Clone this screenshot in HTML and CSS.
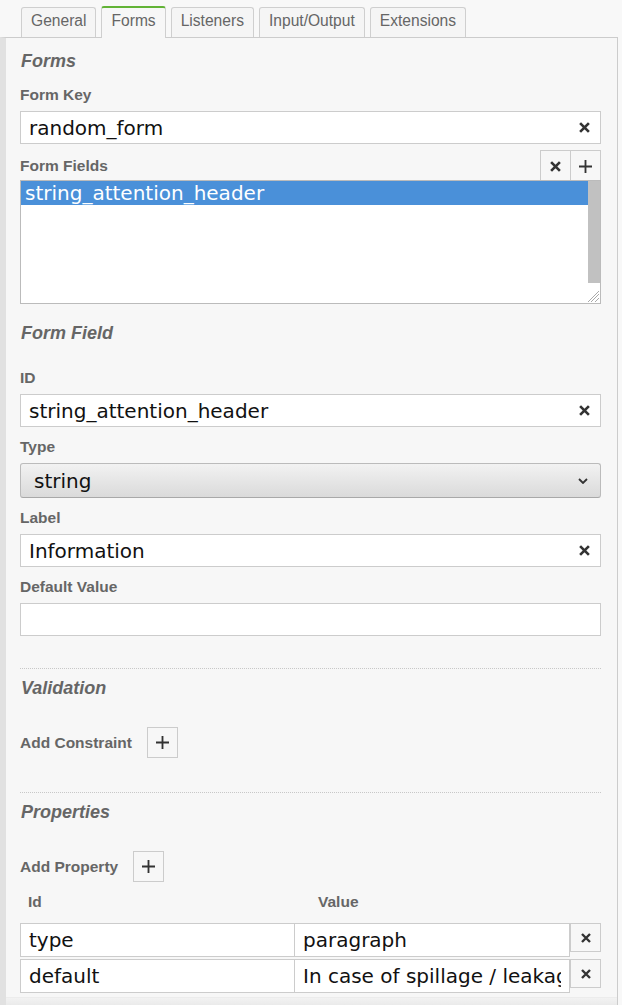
FILE: index.html
```html
<!DOCTYPE html>
<html>
<head>
<meta charset="utf-8">
<link rel="stylesheet" href="styles.css">
</head>
<body>
<div class="tabs">
  <div class="tab">General</div>
  <div class="tab active">Forms</div>
  <div class="tab">Listeners</div>
  <div class="tab">Input/Output</div>
  <div class="tab">Extensions</div>
</div>
<div class="panel">
  <div class="panel-body">
    <div class="title t-forms">Forms</div>
    <div class="field f-key">
      <div class="label">Form Key</div>
      <div class="input"><span class="val">random_form</span><svg class="clear" width="11" height="11" viewBox="0 0 10 10"><path d="M1 1L9 9M9 1L1 9"/></svg></div>
    </div>
    <div class="list-head">
      <div class="label">Form Fields</div>
      <div class="btn-group">
        <div class="btn"><svg class="ico-x" width="11" height="11" viewBox="0 0 10 10"><path d="M1 1L9 9M9 1L1 9"/></svg></div>
        <div class="btn"><svg class="ico-plus" width="13" height="13" viewBox="0 0 12 12"><path d="M6 0V12M0 6H12"/></svg></div>
      </div>
    </div>
    <div class="list">
      <div class="list-items">
        <div class="list-item selected">string_attention_header</div>
      </div>
      <div class="scroll"><div class="thumb"></div></div>
      <svg class="grip" width="12" height="12" viewBox="0 0 12 12"><path d="M11 3L3 11M11 7L7 11M11 0L0 11"/></svg>
    </div>

    <div class="title t-field">Form Field</div>
    <div class="field f-id">
      <div class="label">ID</div>
      <div class="input"><span class="val">string_attention_header</span><svg class="clear" width="11" height="11" viewBox="0 0 10 10"><path d="M1 1L9 9M9 1L1 9"/></svg></div>
    </div>
    <div class="field f-type">
      <div class="label">Type</div>
      <div class="select"><span class="val">string</span><svg class="chev" width="10" height="6" viewBox="0 0 10 6"><path d="M1 1L5 5L9 1"/></svg></div>
    </div>
    <div class="field f-label">
      <div class="label">Label</div>
      <div class="input"><span class="val">Information</span><svg class="clear" width="11" height="11" viewBox="0 0 10 10"><path d="M1 1L9 9M9 1L1 9"/></svg></div>
    </div>
    <div class="field f-default">
      <div class="label">Default Value</div>
      <div class="input"><span class="val"></span></div>
    </div>

    <div class="sep s-1"></div>
    <div class="title t-sub">Validation</div>
    <div class="add-row">
      <div class="label">Add Constraint</div>
      <div class="btn single"><svg class="ico-plus" width="13" height="13" viewBox="0 0 12 12"><path d="M6 0V12M0 6H12"/></svg></div>
    </div>

    <div class="sep s-2"></div>
    <div class="title t-sub">Properties</div>
    <div class="add-row">
      <div class="label">Add Property</div>
      <div class="btn single"><svg class="ico-plus" width="13" height="13" viewBox="0 0 12 12"><path d="M6 0V12M0 6H12"/></svg></div>
    </div>

    <div class="props">
      <div class="th th-id">Id</div>
      <div class="th th-val">Value</div>
      <div></div>
      <div class="cell"><span class="val">type</span></div>
      <div class="cell cell-val"><span class="val">paragraph</span></div>
      <div class="btn row-btn"><svg class="ico-x" width="10" height="10" viewBox="0 0 10 10"><path d="M1 1L9 9M9 1L1 9"/></svg></div>
      <div class="cell r2"><span class="val">default</span></div>
      <div class="cell cell-val r2"><span class="val">In case of spillage / leakag</span></div>
      <div class="btn row-btn r2"><svg class="ico-x" width="10" height="10" viewBox="0 0 10 10"><path d="M1 1L9 9M9 1L1 9"/></svg></div>
    </div>
  </div>
  <div class="panel-foot"></div>
</div>
</body>
</html>
```

FILE: styles.css
```css
* { box-sizing: border-box; }

html, body {
  margin: 0;
  padding: 0;
  background: #f8f8f8;
}

body {
  width: 622px;
  height: 1005px;
  overflow: hidden;
  font-family: "Liberation Sans", Arial, sans-serif;
}

/* ---------- tabs ---------- */
.tabs {
  display: flex;
  align-items: flex-end;
  gap: 5px;
  padding: 6px 0 0 21px;
  height: 37px;
}

.tab {
  height: 30px;
  padding: 4px 9px 0;
  border: 1px solid #cfcfcf;
  border-bottom: none;
  border-radius: 3px 3px 0 0;
  background: #f5f5f5;
  color: #666;
  font-size: 15.6px;
  line-height: 18px;
}

.tab.active {
  position: relative;
  z-index: 2;
  height: 32px;
  margin-bottom: -1px;
  padding-top: 4px;
  border-top: 2px solid #62b336;
  background: #f7f7f7;
}

/* ---------- panel ---------- */
.panel {
  width: 618px;
  border-top: 1px solid #cccccc;
  border-left: 6px solid #e1e1e1;
  border-right: 1px solid #cccccc;
  background: #f7f7f7;
}

.panel-body {
  display: flex;
  flex-direction: column;
  padding: 12px 16px 4px 14px;
}

.panel-foot {
  height: 12px;
  background: linear-gradient(#f2f2f2, #e6e6e6);
  border-top: 1px solid #ececec;
}

.title {
  font-size: 18px;
  line-height: 22px;
  font-weight: bold;
  font-style: italic;
  color: #666;
  padding-left: 1px;
}

.t-forms { margin-bottom: 14px; }
.t-field { margin-top: 18px; }
.t-sub { margin-top: 8px; }

.label {
  font-size: 15.5px;
  line-height: 18px;
  font-weight: bold;
  color: #666;
}

.field {
  display: flex;
  flex-direction: column;
  gap: 7px;
}

.f-id { margin-top: 25px; }
.f-type { margin-top: 11px; }
.f-label { margin-top: 11px; }
.f-default { margin-top: 11px; }

.input {
  display: flex;
  align-items: center;
  height: 33px;
  padding: 0 10px 0 8px;
  border: 1px solid #cccccc;
  background: #fff;
  font-family: "DejaVu Sans", Verdana, sans-serif;
  font-size: 20px;
  color: #111;
}

.val {
  flex: 1;
  min-width: 0;
  white-space: nowrap;
  overflow: hidden;
}

.clear path,
.ico-x path {
  stroke: #333;
  stroke-width: 2.4;
  fill: none;
}

.ico-plus path {
  stroke: #333;
  stroke-width: 1.7;
  fill: none;
}

/* ---------- form fields list ---------- */
.list-head {
  display: flex;
  align-items: center;
  justify-content: space-between;
  margin-top: 6px;
  height: 31px;
}

.btn-group {
  display: flex;
  align-self: stretch;
}

.btn {
  display: flex;
  align-items: center;
  justify-content: center;
  width: 31px;
  border: 1px solid #cccccc;
  background: #f7f7f7;
}

.btn-group .btn {
  height: 32px;
}

.btn-group .btn + .btn {
  margin-left: -1px;
}

.list {
  position: relative;
  display: flex;
  height: 124px;
  margin-top: -1px;
  border: 1px solid #bbbbbb;
  background: #fff;
}

.list-items {
  flex: 1;
}

.list-item {
  height: 24px;
  padding-left: 4px;
  font-family: "DejaVu Sans", Verdana, sans-serif;
  font-size: 20px;
  line-height: 24px;
  color: #111;
}

.list-item.selected {
  background: #4a90d9;
  color: #fff;
}

.scroll {
  width: 12px;
}

.thumb {
  height: 102px;
  background: #c1c1c1;
}

.grip {
  position: absolute;
  right: 0;
  bottom: 0;
}

.grip path {
  stroke: #aaaaaa;
  stroke-width: 1;
  fill: none;
}

/* ---------- select ---------- */
.select {
  display: flex;
  align-items: center;
  height: 35px;
  padding: 0 12px 0 13px;
  border: 1px solid #bbbbbb;
  border-bottom-color: #a8a8a8;
  border-radius: 3px;
  background: linear-gradient(#f2f2f2, #dadada);
  font-family: "DejaVu Sans", Verdana, sans-serif;
  font-size: 20px;
  color: #111;
}

.chev path {
  stroke: #333;
  stroke-width: 1.8;
  fill: none;
}

/* ---------- separators / add rows ---------- */
.sep {
  height: 1px;
  border-top: 1px dotted #c8c8c8;
}

.s-1 { margin-top: 32px; }
.s-2 { margin-top: 34px; }

.add-row {
  display: flex;
  align-items: center;
  gap: 15px;
  margin-top: 28px;
}

.btn.single {
  height: 31px;
}

/* ---------- properties table ---------- */
.props {
  display: grid;
  grid-template-columns: 275px 275px 31px;
  align-items: start;
  margin-top: 11px;
}

.th {
  font-size: 15.5px;
  line-height: 18px;
  font-weight: bold;
  color: #666;
  margin-bottom: 12px;
}

.th-id { padding-left: 8px; }
.th-val { padding-left: 23px; }

.cell {
  display: flex;
  align-items: center;
  height: 34px;
  padding: 0 8px;
  border: 1px solid #cccccc;
  background: #fff;
  font-family: "DejaVu Sans", Verdana, sans-serif;
  font-size: 20px;
  color: #111;
}

.cell-val {
  margin-left: -1px;
}

.row-btn {
  height: 29px;
  background: #f7f7f7;
}

.r2 {
  margin-top: 2px;
}
```
